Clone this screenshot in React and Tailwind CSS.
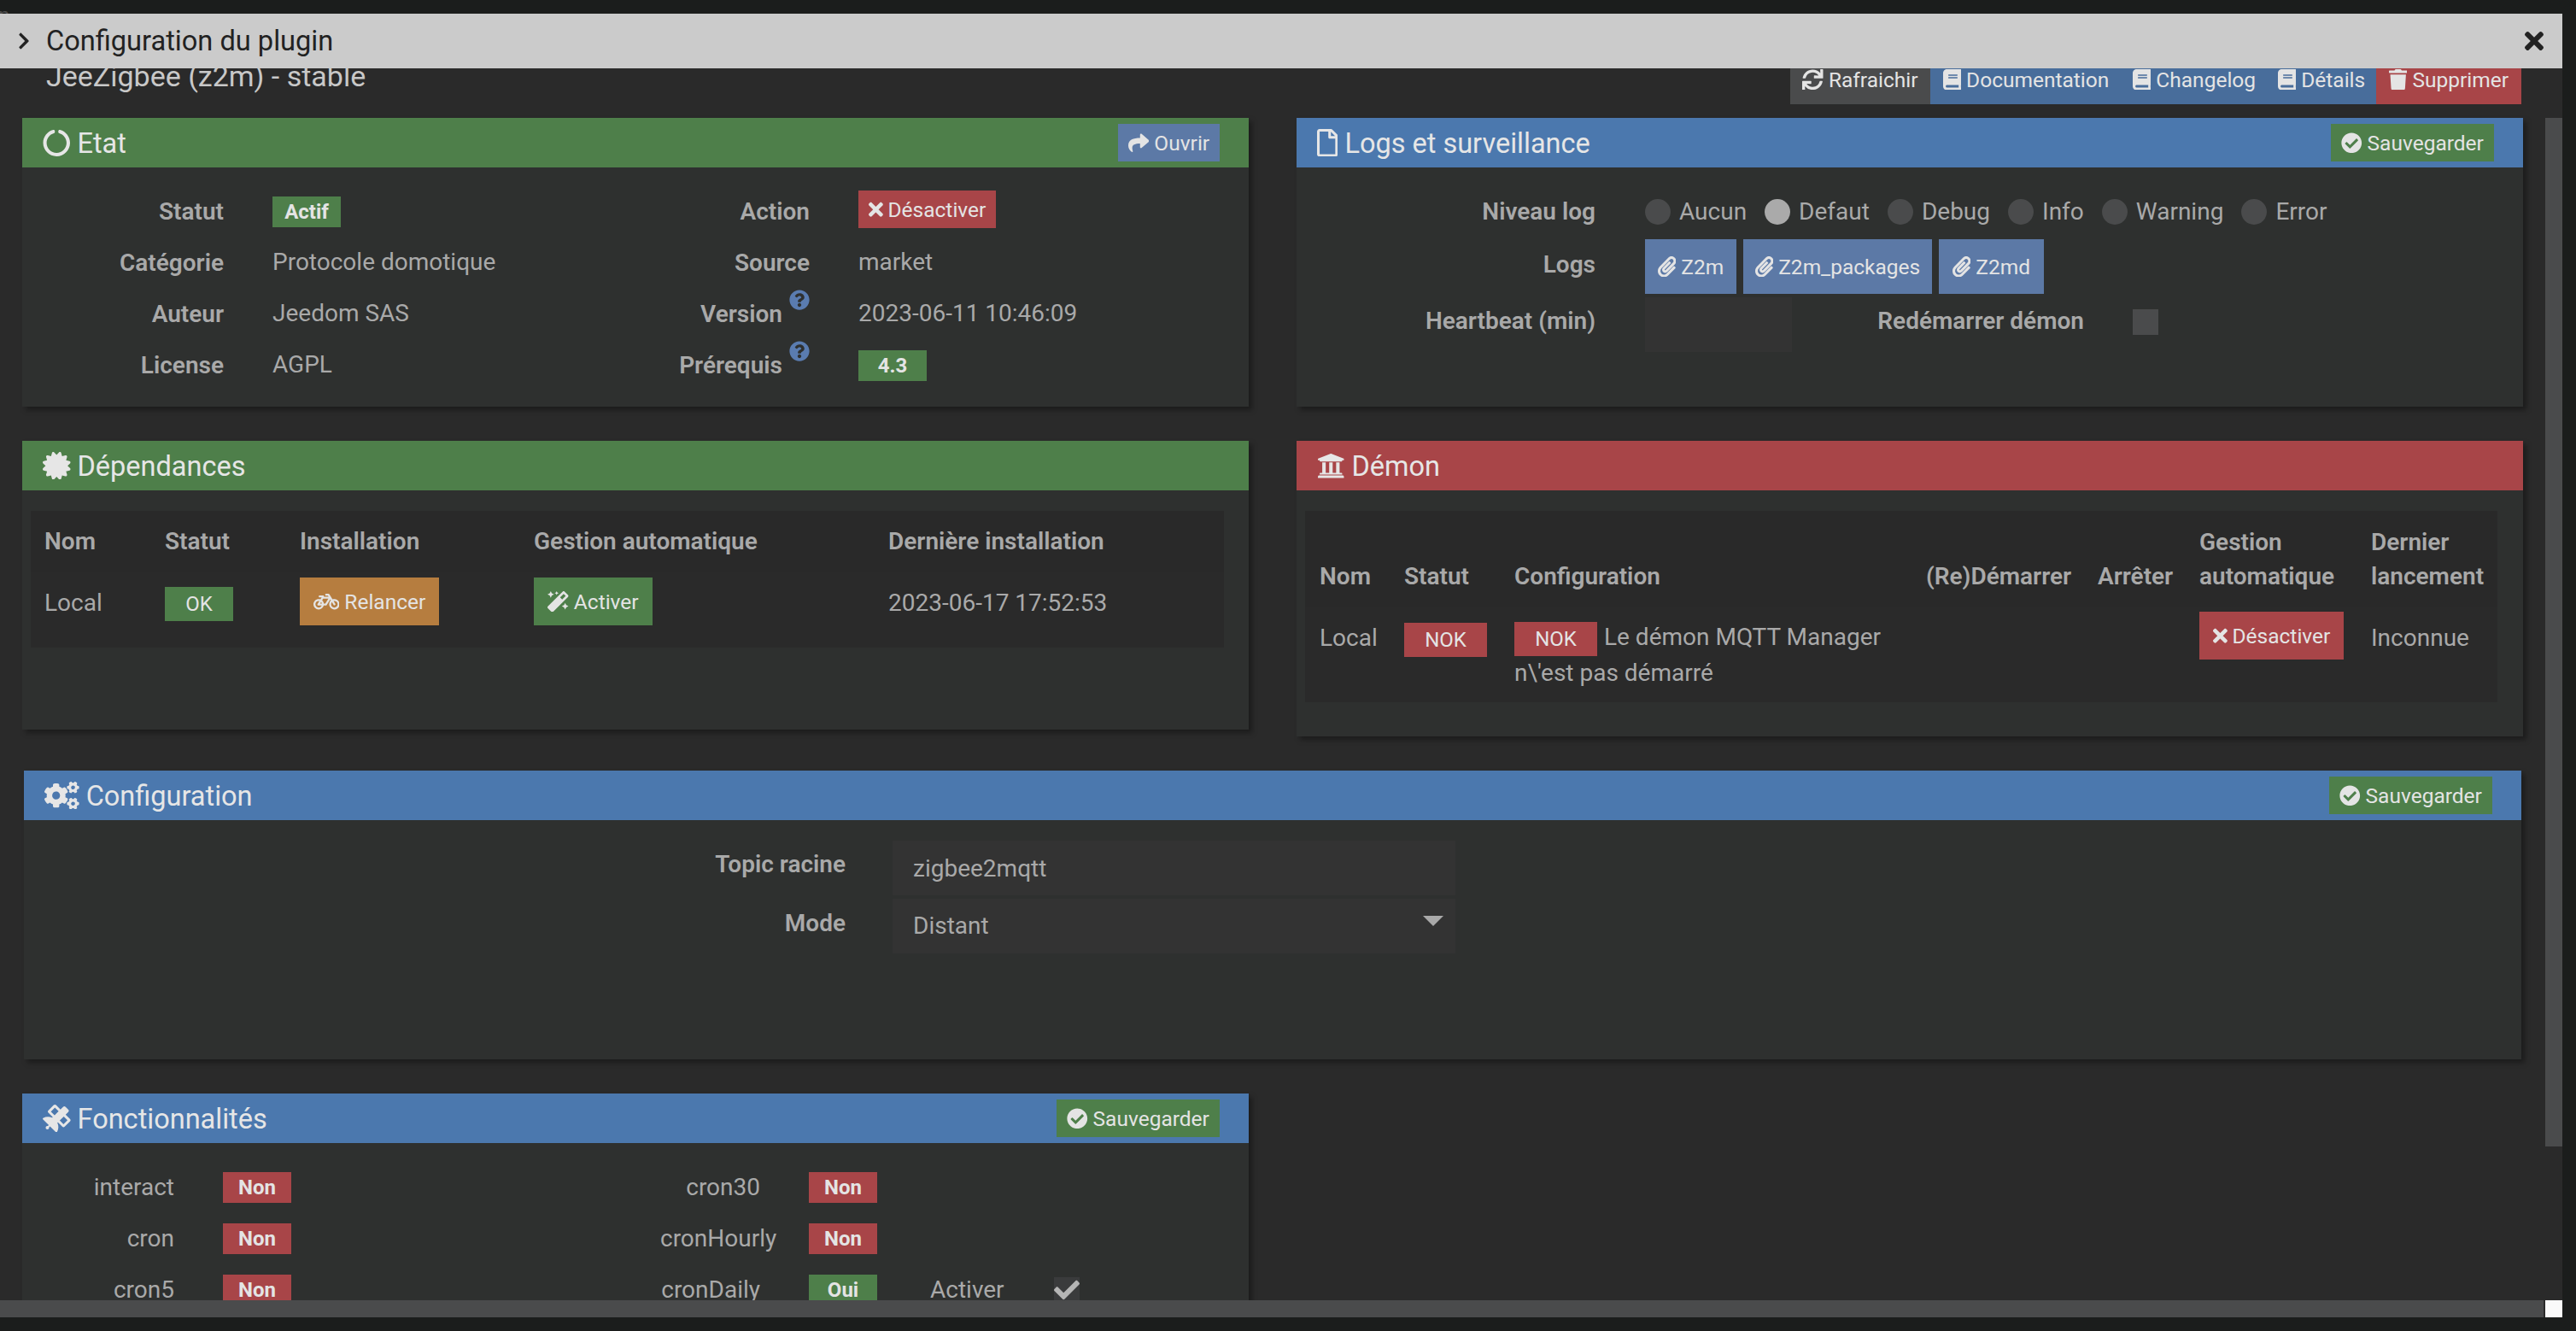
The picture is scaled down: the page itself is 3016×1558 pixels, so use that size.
import React from "react";
import {
  FaBicycle,
  FaBook,
  FaCertificate,
  FaCheck,
  FaCheckCircle,
  FaChevronRight,
  FaCircleNotch,
  FaCogs,
  FaMagic,
  FaPaperclip,
  FaQuestionCircle,
  FaRegFile,
  FaSatellite,
  FaShare,
  FaSync,
  FaTimes,
  FaTrash,
  FaUniversity,
} from "react-icons/fa";

// icon widths follow the glyph, react-icons alone would squeeze them in a 1em square
const Panel = ({ title, icon: Icon, iconW = "w-[1em]", color, action, className = "", children }) => (
  <section className={`bg-[#2e302f] shadow-[4px_4px_6px_rgba(0,0,0,0.35)] ${className}`}>
    <div className={`h-[58px] flex items-center justify-between pl-[24px] pr-[34px] text-[32.5px] text-[#e6e6e6] ${color}`}>
      <div className="flex items-center gap-[8px]">
        <Icon className={`h-[1em] ${iconW}`} />
        <span className="pt-[3px]">{title}</span>
      </div>
      {action}
    </div>
    {children}
  </section>
);

const Btn = ({ icon: Icon, iconW = "w-[1em]", color, className = "", children }) => (
  <div className={`inline-flex items-center justify-center gap-[6px] text-[24.5px] text-[#e4e4e4] ${color} ${className}`}>
    <Icon className={`h-[1em] shrink-0 ${iconW}`} />
    <span className="pt-[3px]">{children}</span>
  </div>
);

const Save = () => (
  <Btn icon={FaCheckCircle} color="bg-[#4e7f4a]" className="w-[191px] h-[44px]">
    Sauvegarder
  </Btn>
);

const Badge = ({ color, children }) => (
  <div className={`w-[80px] h-[36px] flex items-center justify-center text-[24px] font-bold text-[#e4e4e4] ${color}`}>
    {children}
  </div>
);

const Status = ({ color, className = "", children }) => (
  <span className={`inline-flex items-center justify-center h-[40px] text-[24px] text-[#e4e4e4] align-middle ${color} ${className}`}>
    {children}
  </span>
);

const Label = ({ className = "", children }) => (
  <div className={`text-right font-semibold whitespace-nowrap ${className}`}>{children}</div>
);

const HelpLabel = ({ children }) => (
  <div className="flex justify-end items-start gap-[8px] font-semibold">
    <span>{children}</span>
    <FaQuestionCircle className="text-[24px] text-[#5a7cb0] mt-[-8px]" />
  </div>
);

const Radio = ({ checked, children }) => (
  <div className="flex items-center gap-[10px]">
    <div className={`w-[30px] h-[30px] rounded-full ${checked ? "bg-[#aaaaaa]" : "bg-[#4a4b4c]"}`} />
    <span>{children}</span>
  </div>
);

const LogBtn = ({ children, className = "" }) => (
  <Btn icon={FaPaperclip} iconW="w-[0.875em]" color="bg-[#5c79a6]" className={`h-[64px] gap-[3px] ${className}`}>
    {children}
  </Btn>
);

const Th = ({ className = "", children }) => (
  <th className={`text-left font-semibold leading-[40px] ${className}`}>{children}</th>
);

export default function App() {
  return (
    <div className="w-[3016px] h-[1558px] bg-[#1b1d1c] overflow-hidden font-['Roboto',sans-serif] text-[28px] text-[#a9a9a9]">
      <div className="h-[16px] overflow-hidden">
        <div className="text-[24px] leading-[20px] pt-[8px] -ml-[2px] text-[#4c4c4c]">n</div>
      </div>

      <div className="relative w-[3000px] h-[1526px] bg-[#2a2a2a] overflow-hidden flex flex-col">
        {/* TITLE BAR */}
        <div className="relative z-10 h-[64px] shrink-0 bg-[#cbcbcb] flex items-center justify-between pl-[21px] pr-[22px] text-[#222222]">
          <div className="flex items-center gap-[19px]">
            <FaChevronRight className="h-[22px] w-[14px]" />
            <span className="text-[32.6px]">Configuration du plugin</span>
          </div>
          <FaTimes className="h-[32px] w-[22px]" />
        </div>

        <div className="flex-1 overflow-hidden">
          {/* PLUGIN HEADER */}
          <div className="h-[42px] flex justify-between pl-[54px] pr-[48px]">
            <div className="text-[34px] leading-[40px] -mt-[11px] text-[#c8c8c8]">JeeZigbee (z2m) - stable</div>
            <div className="flex h-full -mt-[8px] pt-[8px] box-content">
              <Btn icon={FaSync} color="bg-[#4a4b4c]" className="w-[164px] pb-[16px]">Rafraichir</Btn>
              <Btn icon={FaBook} iconW="w-[0.875em]" color="bg-[#486d9b]" className="w-[224px] pb-[16px]">Documentation</Btn>
              <Btn icon={FaBook} iconW="w-[0.875em]" color="bg-[#486d9b]" className="w-[170px] pb-[16px]">Changelog</Btn>
              <Btn icon={FaBook} iconW="w-[0.875em]" color="bg-[#486d9b]" className="w-[128px] pb-[16px]">Détails</Btn>
              <Btn icon={FaTrash} iconW="w-[0.875em]" color="bg-[#a84548]" className="w-[170px] pb-[16px]">Supprimer</Btn>
            </div>
          </div>

          <div className="grid grid-cols-[1436px_1436px] gap-x-[56px] items-start pl-[26px] mt-[16px]">
            {/* ETAT */}
            <Panel
              title="Etat"
              icon={FaCircleNotch}
              color="bg-[#4e7f4a]"
              className="h-[338px]"
              action={<Btn icon={FaShare} color="bg-[#5c79a6]" className="w-[119px] h-[44px]">Ouvrir</Btn>}
            >
              <div className="grid grid-cols-[236px_400px_172px_1fr] gap-x-[57px] gap-y-[24px] auto-rows-[36px] items-center pt-[34px]">
                <Label>Statut</Label>
                <div><Badge color="bg-[#4e7f4a]">Actif</Badge></div>
                <Label>Action</Label>
                <div className="-mt-[4px]">
                  <Btn icon={FaTimes} iconW="w-[0.6875em]" color="bg-[#a84548]" className="w-[161px] h-[44px] gap-[5px]">Désactiver</Btn>
                </div>
                <Label>Catégorie</Label>
                <div className="-mt-[2px]">Protocole domotique</div>
                <Label>Source</Label>
                <div className="-mt-[2px]">market</div>
                <Label>Auteur</Label>
                <div className="-mt-[2px]">Jeedom SAS</div>
                <HelpLabel>Version</HelpLabel>
                <div className="-mt-[2px]">2023-06-11 10:46:09</div>
                <Label>License</Label>
                <div className="-mt-[2px]">AGPL</div>
                <HelpLabel>Prérequis</HelpLabel>
                <div><Badge color="bg-[#4e7f4a]">4.3</Badge></div>
              </div>
            </Panel>

            {/* LOGS */}
            <Panel
              title="Logs et surveillance"
              icon={FaRegFile}
              iconW="w-[0.75em]"
              color="bg-[#4b78ae]"
              className="h-[338px]"
              action={<Save />}
            >
              <div className="pt-[34px] flex flex-col">
                <div className="flex items-center h-[36px] gap-x-[58px]">
                  <div className="w-[350px]"><Label>Niveau log</Label></div>
                  <div className="flex items-center gap-[21px]">
                    <Radio>Aucun</Radio>
                    <Radio checked>Defaut</Radio>
                    <Radio>Debug</Radio>
                    <Radio>Info</Radio>
                    <Radio>Warning</Radio>
                    <Radio>Error</Radio>
                  </div>
                </div>
                <div className="flex items-center h-[64px] mt-[14px] gap-x-[58px]">
                  <div className="w-[350px]"><Label className="-mt-[4px]">Logs</Label></div>
                  <div className="flex gap-[8px]">
                    <LogBtn className="w-[107px]">Z2m</LogBtn>
                    <LogBtn className="w-[221px]">Z2m_packages</LogBtn>
                    <LogBtn className="w-[123px]">Z2md</LogBtn>
                  </div>
                </div>
                <div className="flex items-center h-[64px] mt-[4px] gap-x-[58px]">
                  <div className="w-[350px]"><Label className="-mt-[8px]">Heartbeat (min)</Label></div>
                  <div className="w-[172px] h-[64px] bg-[#333333]" />
                  <div className="w-[284px]"><Label className="-mt-[8px]">Redémarrer démon</Label></div>
                  <div className="w-[30px] h-[30px] bg-[#4a4b4c] -ml-[1px] -mt-[6px]" />
                </div>
              </div>
            </Panel>

            {/* DEPENDANCES */}
            <Panel title="Dépendances" icon={FaCertificate} color="bg-[#4e7f4a]" className="h-[338px] mt-[40px]">
              <div className="px-[10px] pt-[24px]">
                <table className="table-fixed w-[1397px] bg-[#2a2a2a]">
                  <colgroup>
                    <col className="w-[141px]" />
                    <col className="w-[158px]" />
                    <col className="w-[274px]" />
                    <col className="w-[415px]" />
                    <col />
                  </colgroup>
                  <thead>
                    <tr className="h-[72px] bg-[#292929]">
                      <Th className="pl-[16px]">Nom</Th>
                      <Th className="pl-[16px]">Statut</Th>
                      <Th className="pl-[16px]">Installation</Th>
                      <Th className="pl-[16px]">Gestion automatique</Th>
                      <Th className="pl-[16px]">Dernière installation</Th>
                    </tr>
                  </thead>
                  <tbody>
                    <tr className="h-[88px]">
                      <td className="pl-[16px] pb-[16px]">Local</td>
                      <td className="pl-[16px] pb-[16px]"><Status color="bg-[#4e7f4a]" className="w-[80px]">OK</Status></td>
                      <td className="pl-[16px] pb-[16px]">
                        <Btn icon={FaBicycle} iconW="w-[1.25em]" color="bg-[#b67d3f]" className="w-[163px] h-[56px] mb-[4px] align-middle">Relancer</Btn>
                      </td>
                      <td className="pl-[16px] pb-[16px]">
                        <Btn icon={FaMagic} color="bg-[#4e7f4a]" className="w-[139px] h-[56px] mb-[4px] align-middle">Activer</Btn>
                      </td>
                      <td className="pl-[16px] pb-[16px]">2023-06-17 17:52:53</td>
                    </tr>
                  </tbody>
                </table>
              </div>
            </Panel>

            {/* DEMON */}
            <Panel title="Démon" icon={FaUniversity} color="bg-[#a84548]" className="h-[346px] mt-[40px]">
              <div className="px-[10px] pt-[24px]">
                <table className="table-fixed w-[1396px] bg-[#2a2a2a]">
                  <colgroup>
                    <col className="w-[99px]" />
                    <col className="w-[129px]" />
                    <col className="w-[482px]" />
                    <col className="w-[201px]" />
                    <col className="w-[119px]" />
                    <col className="w-[201px]" />
                    <col />
                  </colgroup>
                  <thead>
                    <tr className="h-[112px] bg-[#292929]">
                      <Th className="pl-[17px] align-bottom pb-[15px]">Nom</Th>
                      <Th className="pl-[17px] align-bottom pb-[15px]">Statut</Th>
                      <Th className="pl-[17px] align-bottom pb-[15px]">Configuration</Th>
                      <Th className="pl-[17px] align-bottom pb-[15px] whitespace-nowrap">(Re)Démarrer</Th>
                      <Th className="pl-[17px] align-bottom pb-[15px]">Arrêter</Th>
                      <Th className="pl-[17px] align-bottom pb-[15px]">Gestion automatique</Th>
                      <Th className="pl-[17px] align-bottom pb-[15px]">Dernier lancement</Th>
                    </tr>
                  </thead>
                  <tbody>
                    <tr className="h-[112px] align-top">
                      <td className="pl-[17px] pt-[17px] leading-[40px]">Local</td>
                      <td className="pl-[17px] pt-[16px]"><Status color="bg-[#a84548]" className="w-[97px]">NOK</Status></td>
                      <td className="pl-[17px] pt-[16px] leading-[40px]">
                        <Status color="bg-[#a84548]" className="w-[97px] mr-[8px]">NOK</Status>
                        Le démon MQTT Manager n\'est pas démarré
                      </td>
                      <td />
                      <td />
                      <td className="pl-[17px] pt-[6px]">
                        <Btn icon={FaTimes} iconW="w-[0.6875em]" color="bg-[#a84548]" className="w-[169px] h-[56px] gap-[5px]">Désactiver</Btn>
                      </td>
                      <td className="pl-[17px] pt-[17px] leading-[40px]">Inconnue</td>
                    </tr>
                  </tbody>
                </table>
              </div>
            </Panel>
          </div>

          {/* CONFIGURATION */}
          <div className="pl-[28px] mt-[40px]">
            <Panel
              title="Configuration"
              icon={FaCogs}
              iconW="w-[1.25em]"
              color="bg-[#4b78ae]"
              className="w-[2924px] h-[338px] shadow-[0_10px_40px_rgba(0,0,0,0.5)]"
              action={<Save />}
            >
              <div className="grid grid-cols-[962px_659px] gap-x-[55px] gap-y-[4px] pt-[24px] items-center">
                <Label className="-mt-[8px]">Topic racine</Label>
                <input
                  readOnly
                  value="zigbee2mqtt"
                  className="h-[64px] bg-[#333333] px-[24px] text-[#a9a9a9] outline-none"
                />
                <Label className="-mt-[6px]">Mode</Label>
                <div className="relative h-[64px] bg-[#333333] px-[24px] flex items-center">
                  Distant
                  <svg viewBox="0 0 24 12" className="absolute right-[14px] top-[20px] w-[24px] h-[12px] fill-[#a9a9a9]">
                    <polygon points="0,0 24,0 12,12" />
                  </svg>
                </div>
              </div>
            </Panel>
          </div>

          {/* FONCTIONNALITES */}
          <div className="pl-[26px] mt-[40px]">
            <Panel
              title="Fonctionnalités"
              icon={FaSatellite}
              color="bg-[#4b78ae]"
              className="w-[1436px] h-[338px]"
              action={<Save />}
            >
              <div className="grid grid-cols-[178px_455px_117px_85px_88px_30px] gap-x-[57px] gap-y-[24px] auto-rows-[36px] items-center pt-[34px]">
                <div className="text-right">interact</div>
                <div><Badge color="bg-[#a84548]">Non</Badge></div>
                <div className="text-right whitespace-nowrap">cron30</div>
                <div><Badge color="bg-[#a84548]">Non</Badge></div>
                <div />
                <div />
                <div className="text-right">cron</div>
                <div><Badge color="bg-[#a84548]">Non</Badge></div>
                <div className="text-right whitespace-nowrap">cronHourly</div>
                <div><Badge color="bg-[#a84548]">Non</Badge></div>
                <div />
                <div />
                <div className="text-right">cron5</div>
                <div><Badge color="bg-[#a84548]">Non</Badge></div>
                <div className="text-right whitespace-nowrap">cronDaily</div>
                <div><Badge color="bg-[#4e7f4a]">Oui</Badge></div>
                <div>Activer</div>
                <div className="w-[30px] h-[30px] bg-[#3a3b3c] flex items-center justify-center">
                  <FaCheck className="text-[30px] text-[#b5b5b5]" />
                </div>
              </div>
            </Panel>
          </div>
        </div>

        {/* SCROLLBARS */}
        <div className="absolute z-20 left-[2980px] top-[122px] w-[20px] h-[1204px] bg-[#4a4b4c]" />
        <div className="absolute z-20 left-0 top-[1506px] w-[2978px] h-[20px] bg-[#4a4b4c]" />
        <div className="absolute z-20 left-[2980px] top-[1506px] w-[20px] h-[20px] bg-[#fafafa]" />
      </div>
    </div>
  );
}
